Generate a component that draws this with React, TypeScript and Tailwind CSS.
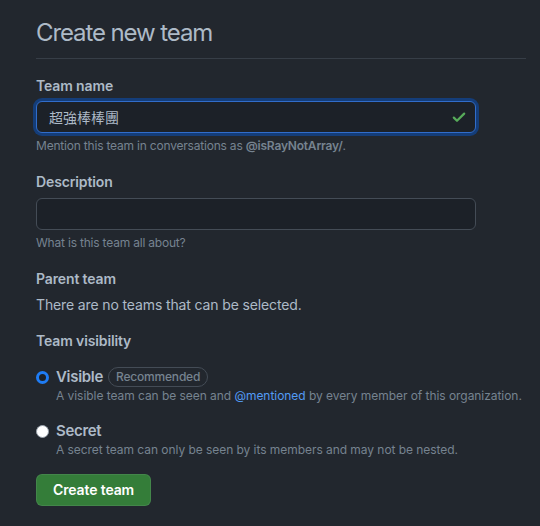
import React from "react";

function CheckIcon() {
  return (
    <svg viewBox="0 0 16 16" width="16" height="16" fill="none" aria-hidden="true">
      <path d="M2.8 8.6 6 11.8 13.2 4.6" stroke="#57ab5a" strokeWidth="2.2" strokeLinecap="round" strokeLinejoin="round" />
    </svg>
  );
}

export default function App() {
  return (
    <div
      className="min-h-[526px] w-[540px] bg-[#22272e] pl-[36px] pr-[10px] pt-[15px] tracking-[-0.13px] text-[#adbac7]"
      style={{ fontFamily: 'Inter, "Noto Sans CJK TC", sans-serif' }}
    >
      {/* Subhead */}
      <div className="mr-[4px] border-b border-[#373e47] pb-[7px]">
        <h2 className="text-2xl leading-9 font-normal tracking-[-1.1px]">Create new team</h2>
      </div>

      {/* Team name */}
      <div className="mt-[16px]">
        <label className="block text-sm leading-[21px] font-semibold">Team name</label>
        <div className="mt-[5px] flex h-8 w-[440px] items-center justify-between rounded-md border border-[#316dca] bg-[#1c2128] pl-3 pr-2 shadow-[0_0_0_3px_#143d79]">
          <span className="text-sm tracking-normal" style={{ fontFamily: '"Noto Sans CJK TC", sans-serif' }}>
            超強棒棒團
          </span>
          <CheckIcon />
        </div>
        <p className="mt-1 text-xs leading-[18px] tracking-[-0.2px] text-[#768390]">
          Mention this team in conversations as <strong className="font-semibold">@isRayNotArray/</strong>.
        </p>
      </div>

      {/* Description */}
      <div className="mt-[16px]">
        <label className="block text-sm leading-[21px] font-semibold">Description</label>
        <div className="mt-[6px] h-8 w-[440px] rounded-md border border-[#444c56] bg-[#1c2128]" />
        <p className="mt-1 text-xs leading-[18px] tracking-[-0.2px] text-[#768390]">What is this team all about?</p>
      </div>

      {/* Parent team */}
      <div className="mt-[16px]">
        <label className="block text-sm leading-[21px] font-semibold">Parent team</label>
        <p className="mt-[5px] text-sm leading-[21px]">There are no teams that can be selected.</p>
      </div>

      {/* Visibility */}
      <div className="mt-[15px]">
        <label className="block text-sm leading-[21px] font-semibold">Team visibility</label>

        <div className="mt-[16px] flex gap-[7px]">
          <div className="mt-[4px] h-[13px] w-[13px] shrink-0 rounded-full border-[3.5px] border-[#1f7cf4] bg-[#1c2128]" />
          <div>
            <div className="flex items-center gap-[5px]">
              <span className="text-[15px] leading-5 font-semibold tracking-[-0.3px]">Visible</span>
              <span className="rounded-full border border-[#444c56] px-[7px] text-xs leading-[18px] font-medium tracking-[-0.2px] text-[#768390]">
                Recommended
              </span>
            </div>
            <p className="whitespace-nowrap text-xs leading-[18px] tracking-[-0.05px] text-[#768390]">
              A visible team can be seen and <span className="text-[#539bf5]">@mentioned</span> by every member of this organization.
            </p>
          </div>
        </div>

        <div className="mt-[16px] flex gap-[7px]">
          <div className="mt-[4px] h-[13px] w-[13px] shrink-0 rounded-full border border-[#9aa3ad] bg-white" />
          <div>
            <span className="block text-[15px] leading-5 font-semibold tracking-[-0.3px]">Secret</span>
            <p className="whitespace-nowrap text-xs leading-[18px] tracking-[-0.05px] text-[#768390]">
              A secret team can only be seen by its members and may not be nested.
            </p>
          </div>
        </div>
      </div>

      <button className="mt-[15px] h-8 rounded-md border border-[#cdd9e51a] bg-[#347d39] px-4 text-sm font-semibold text-white">
        Create team
      </button>
    </div>
  );
}
